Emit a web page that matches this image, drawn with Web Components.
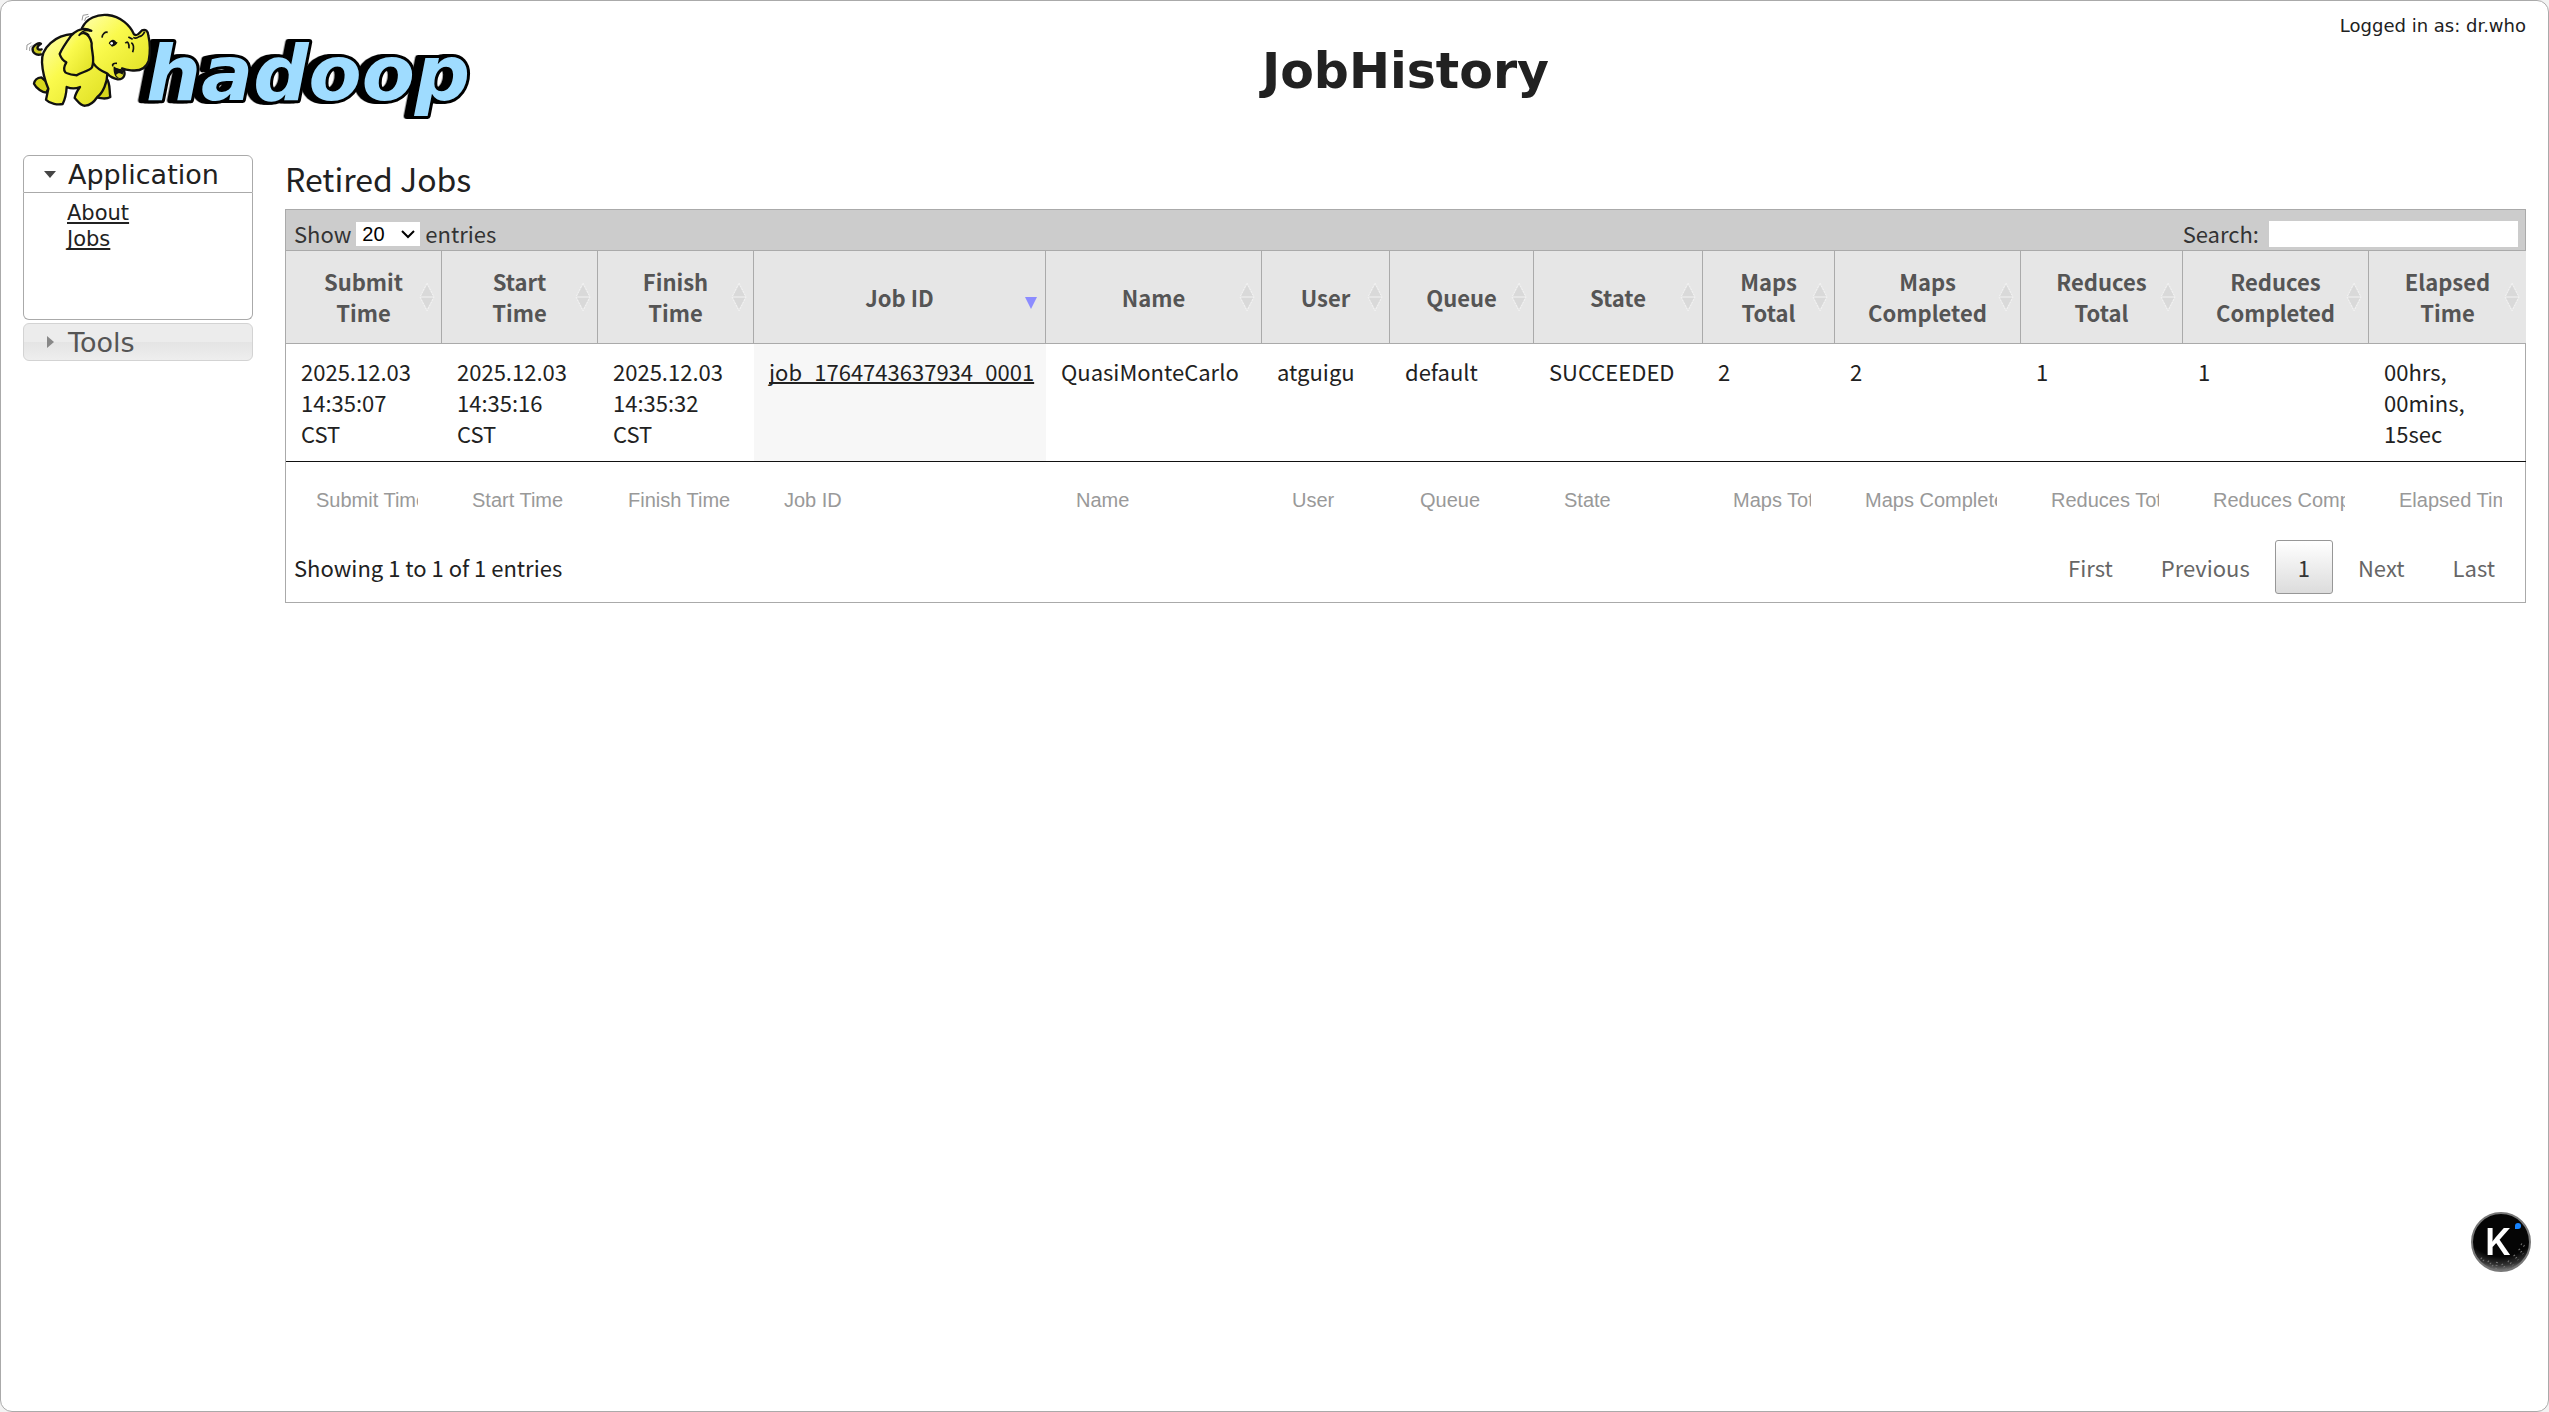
<!DOCTYPE html>
<html lang="en">
<head>
<meta charset="utf-8">
<title>JobHistory</title>
<style>
  body {
    margin: 0;
    background-color: #f3f3f3;
    color: #212121;
    font-family: "DejaVu Sans", sans-serif;
    font-size: 21px;
  }
</style>
</head>
<body>
<jh-page>
  <jh-logo slot="logo"></jh-logo>
  <span slot="user">Logged in as: dr.who</span>
  <span slot="title">JobHistory</span>
  <jh-nav slot="nav"></jh-nav>
  <jh-jobs slot="content"></jh-jobs>
</jh-page>
<jh-assistant></jh-assistant>

<script>
function makeTemplate(html) {
  const template = document.createElement("template");
  template.innerHTML = html;
  return template;
}

class BaseElement extends HTMLElement {
  constructor() {
    super();
    const shadow = this.attachShadow({ mode: "open" });
    shadow.appendChild(this.constructor.template.content.cloneNode(true));
  }
}

class Page extends BaseElement {
  static template = makeTemplate(`
    <style>
      :host {
        display: grid;
        grid-template-columns: 230px minmax(0, 1fr);
        grid-template-rows: auto 1fr;
        column-gap: 32px;
        box-sizing: border-box;
        min-height: 100vh;
        padding: 9px 22px 24px;
        border: solid 1px #aaa;
        border-radius: 12px;
        background-color: #fff;
      }
      .logo {
        height: 145px;
      }
      .banner {
        text-align: center;
      }
      .user {
        padding-top: 4px;
        font-size: 18px;
        line-height: 24px;
        text-align: right;
      }
      h1 {
        margin: 0;
        font-size: 49px;
        line-height: 67px;
      }
    </style>
    <header class="logo"><slot name="logo"></slot></header>
    <div class="banner">
      <div class="user"><slot name="user"></slot></div>
      <h1><slot name="title"></slot></h1>
    </div>
    <slot name="nav"></slot>
    <slot name="content"></slot>
  `);
}

class Logo extends BaseElement {
  static template = makeTemplate(`
    <style>
      :host {
        display: block;
      }
      svg {
        display: block;
        width: 450px;
        height: 110px;
      }
      text {
        font-family: "DejaVu Sans", sans-serif;
        font-size: 232px;
        font-weight: bold;
        font-style: italic;
        fill: #9fdcff;
        stroke: #000;
        stroke-width: 18px;
        stroke-linejoin: round;
        paint-order: stroke;
        filter: drop-shadow(-10px 0 0 #000) drop-shadow(-12px 0 0 #000);
      }
      .ink {
        fill: none;
        stroke: #111;
        stroke-width: 5px;
      }
    </style>
    <svg viewBox="69 30 1350 330" role="img" aria-label="hadoop elephant">
      <defs>
        <linearGradient id="skin" x1="0" y1="0" x2="1" y2="1">
          <stop offset="0" stop-color="#ffffb0"/>
          <stop offset=".4" stop-color="#fafa4d"/>
          <stop offset="1" stop-color="#dede20"/>
        </linearGradient>
      </defs>
      <text x="438" y="300">hadoop</text>
      <g fill="url(#skin)" stroke="#111" stroke-width="7" stroke-linejoin="round" stroke-linecap="round">
        <path d="M124 232C110 233 103 243 102 251C110 267 127 277 139 278L150 255Z" fill="#d6d61c"/>
        <path d="M319 235C332 248 327 270 331 291C320 298 299 296 286 290L296 252Z" fill="#d6d61c"/>
        <path d="M124 163C107 168 96 157 98 144C104 134 116 127 123 131C109 139 108 152 125 148" fill="#c9c91e"/>
        <path d="M219 102C166 105 123 143 126 187C128 225 136 245 145 266L138 299C150 312 174 315 188 312C194 300 199 280 200 261C212 266 226 267 240 261C232 272 226 282 224 294C234 304 242 319 256 317C273 316 284 303 292 291C309 278 322 247 322 221L290 140Z"/>
        <path d="M246 84C260 55 291 42 323 45C362 49 391 77 402 103C414 111 418 97 426 91C437 86 444 94 445 106C451 133 451 158 446 183C438 206 419 214 393 211C384 210 374 208 366 205C380 219 374 239 353 238C337 235 326 226 321 220C304 213 289 203 280 190Z"/>
        <path d="M274 92C251 80 229 91 214 106C201 124 187 143 179 162C183 175 189 182 199 187C192 199 190 210 196 217C206 224 221 224 230 226C245 216 268 213 276 202C286 178 273 150 275 130C271 112 265 102 252 99"/>
      </g>
      <path class="ink" d="M272 94C254 87 243 96 236 107C246 97 260 98 267 105M306 113C307 102 315 95 323 97M400 112C408 118 412 114 417 110C425 109 432 100 434 95M376 130C382 122 388 128 387 145M394 128C402 134 402 145 398 157M385 111L398 118M339 199C335 193 341 189 351 190"/>
      <path d="M326 130C332 117 344 116 349 127C357 122 349 139 336 140Z" fill="#111"/>
      <circle cx="335" cy="130" r="4" fill="#fff"/>
      <path d="M341 199C353 208 362 206 367 209C374 218 367 230 351 234C341 225 340 211 341 199Z" fill="#111"/>
      <path d="M348 225C354 217 362 219 367 224C362 235 353 234 348 225Z" fill="#dada2b"/>
      <path d="M246 61L249 46L265 43M254 63L257 53L267 49M80 150L81 135L94 128M89 153L89 142L98 136" fill="none" stroke="#999" stroke-width="3"/>
    </svg>
  `);
}

class Nav extends BaseElement {
  static template = makeTemplate(`
    <style>
      :host {
        display: block;
      }
      h3 {
        margin: 0;
      }
      button {
        display: flex;
        align-items: center;
        gap: 12px;
        width: 100%;
        height: 38px;
        padding: 0 20px;
        border: solid 1px #aaa;
        border-radius: 6px 6px 0 0;
        background-color: #fff;
        color: #212121;
        font-family: inherit;
        font-size: 27px;
      }
      button svg {
        width: 12px;
        height: 12px;
        fill: #454545;
      }
      .closed {
        margin-top: 3px;
        border-color: #d3d3d3;
        border-radius: 6px;
        background: linear-gradient(#ececec 50%, #e4e4e4 50%, #eee);
        color: #555;
      }
      .closed svg {
        fill: #888;
      }
      ul {
        height: 119px;
        margin: 0;
        padding: 7px 0 0 43px;
        border: solid #aaa;
        border-width: 0 1px 1px;
        border-radius: 0 0 6px 6px;
        list-style: none;
        line-height: 26px;
      }
      a {
        color: #212121;
        text-decoration-thickness: 2px;
        text-decoration-skip-ink: none;
        text-underline-offset: 2px;
      }
    </style>
    <nav>
      <h3><button aria-expanded="true"><svg viewBox="0 0 12 12"><path d="M0 3H12L6 10Z"/></svg>Application</button></h3>
      <ul>
        <li><a href="#about">About</a></li>
        <li><a href="#jobs">Jobs</a></li>
      </ul>
      <h3><button class="closed" aria-expanded="false"><svg viewBox="0 0 12 12"><path d="M3 0L10 6L3 12Z"/></svg>Tools</button></h3>
    </nav>
  `);
}

// Header label with its sort arrows, order="desc" marks the active column
class SortHeader extends BaseElement {
  static template = makeTemplate(`
    <style>
      :host {
        display: grid;
        grid-template-columns: 16px 1fr 16px;
        align-items: center;
      }
      button {
        grid-column: 2;
        padding: 0;
        border: none;
        background: none;
        color: inherit;
        font: inherit;
      }
      svg {
        width: 16px;
        height: 30px;
      }
      .both {
        fill: #d9d9d9;
      }
      .edge {
        fill: none;
        stroke: #f4f4f4;
        stroke-dasharray: 2 1;
      }
      .desc {
        display: none;
        fill: #8c8cff;
      }
      :host([order="desc"]) .both,
      :host([order="desc"]) .edge {
        display: none;
      }
      :host([order="desc"]) .desc {
        display: inline;
      }
    </style>
    <button><slot></slot></button>
    <svg viewBox="0 0 16 30" aria-hidden="true">
      <path class="both" d="M8 3L14 14H2ZM2 16H14L8 27Z"/>
      <path class="edge" d="M8 1L15 15L8 29L1 15Z"/>
      <path class="desc" d="M2 15H14L8 27Z"/>
    </svg>
  `);
}

class Jobs extends BaseElement {
  static template = makeTemplate(`
    <style>
      :host {
        display: block;
        font-family: "Noto Sans CJK SC", sans-serif;
        font-size: 22px;
        line-height: 31px;
      }
      h2 {
        margin: 0;
        padding-bottom: 8px;
        font-size: 32px;
        font-weight: normal;
        line-height: 46px;
      }
      .wrapper {
        border: solid 1px #aaa;
      }
      .toolbar {
        display: flex;
        justify-content: space-between;
        align-items: flex-end;
        box-sizing: border-box;
        height: 41px;
        padding: 0 7px 1px 8px;
        border-bottom: solid 1px #aaa;
        background-color: #ccc;
        color: #333;
      }
      label {
        display: flex;
        align-items: center;
        gap: 5px;
      }
      .search {
        gap: 10px;
      }
      .length {
        display: grid;
        align-items: center;
      }
      .length > * {
        grid-area: 1 / 1;
      }
      .length svg {
        justify-self: end;
        width: 14px;
        height: 10px;
        margin-right: 5px;
        fill: none;
        stroke: #000;
        stroke-width: 2px;
        pointer-events: none;
      }
      select {
        appearance: none;
        width: 64px;
        height: 24px;
        padding: 0 6px;
        border: none;
        border-radius: 0;
        background-color: #fff;
        color: #000;
        font-family: "Liberation Sans", sans-serif;
        font-size: 20px;
      }
      input {
        box-sizing: border-box;
        padding: 1px 3px;
        border: none;
        background-color: #fff;
        font-family: "Liberation Sans", sans-serif;
        font-size: 20px;
      }
      input::placeholder {
        color: #999;
      }
      .search input {
        width: 249px;
        height: 26px;
      }
      table {
        width: 100%;
        table-layout: fixed;
        border-collapse: separate;
        border-spacing: 0;
      }
      thead th {
        padding: 15px 6px;
        border-right: solid 1px #aaa;
        border-bottom: solid 1px #aaa;
        background-color: #e6e6e6;
        color: #555;
      }
      thead th:last-child {
        border-right: none;
      }
      tbody td {
        padding: 12px 15px;
        border-bottom: solid 1px #111;
        vertical-align: top;
      }
      .sorted {
        background-color: #f7f7f7;
      }
      .sorted a {
        color: #212121;
        text-decoration-thickness: 2px;
        text-decoration-skip-ink: none;
      }
      tfoot td {
        padding: 24px 21px 24px 27px;
      }
      tfoot input {
        display: block;
        width: 100%;
        height: 28px;
      }
      .footer {
        display: flex;
        justify-content: space-between;
        align-items: center;
        padding: 2px 7px 8px 8px;
      }
      .pages {
        display: flex;
        gap: 2px;
      }
      .pages button {
        height: 54px;
        padding: 0 22px;
        border: solid 1px transparent;
        border-radius: 3px;
        background: none;
        color: #666;
        font: inherit;
      }
      .pages button.current {
        border-color: #979797;
        background: linear-gradient(#fff, #dcdcdc);
        color: #333;
      }
    </style>
    <h2>Retired Jobs</h2>
    <div class="wrapper">
      <div class="toolbar">
        <label>Show
          <span class="length">
            <select><option>20</option><option>40</option><option>60</option><option>80</option><option>100</option></select>
            <svg viewBox="0 0 14 10"><path d="M1 2L7 8L13 2"/></svg>
          </span>
          entries
        </label>
        <label class="search">Search: <input type="search"></label>
      </div>
      <table>
        <colgroup></colgroup>
        <thead><tr></tr></thead>
        <tbody><tr></tr></tbody>
        <tfoot><tr></tr></tfoot>
      </table>
      <div class="footer">
        <div>Showing 1 to 1 of 1 entries</div>
        <div class="pages">
          <button>First</button>
          <button>Previous</button>
          <button class="current">1</button>
          <button>Next</button>
          <button>Last</button>
        </div>
      </div>
    </div>
  `);

  // the widths are shares, a fixed table stretches them to its own width
  static columns = [
    { name: "Submit Time", width: 156, value: "2025.12.03 14:35:07 CST" },
    { name: "Start Time", width: 156, value: "2025.12.03 14:35:16 CST" },
    { name: "Finish Time", width: 156, value: "2025.12.03 14:35:32 CST" },
    { name: "Job ID", width: 292, value: "job_1764743637934_0001", sorted: true },
    { name: "Name", width: 216, value: "QuasiMonteCarlo" },
    { name: "User", width: 128, value: "atguigu" },
    { name: "Queue", width: 144, value: "default" },
    { name: "State", width: 169, value: "SUCCEEDED" },
    { name: "Maps Total", width: 132, value: "2" },
    { name: "Maps Completed", width: 186, value: "2" },
    { name: "Reduces Total", width: 162, value: "1" },
    { name: "Reduces Completed", width: 186, value: "1" },
    { name: "Elapsed Time", width: 157, value: "00hrs, 00mins, 15sec" },
  ];

  connectedCallback() {
    const cols = Jobs.columns;
    const fill = (selector, render) => {
      this.shadowRoot.querySelector(selector).innerHTML = cols.map(render).join("");
    };
    fill("colgroup", (c) => `<col style="width: ${c.width}px">`);
    fill("thead tr", (c) => {
      const label = c.name.replace(" Time", "<br>Time").replace(" Total", "<br>Total").replace(" Completed", "<br>Completed");
      return `<th scope="col"><jh-sort-header${c.sorted ? ' order="desc"' : ""}>${label}</jh-sort-header></th>`;
    });
    fill("tbody tr", (c) => c.sorted
      ? `<td class="sorted"><a href="#${c.value}">${c.value}</a></td>`
      : `<td>${c.value}</td>`);
    fill("tfoot tr", (c) => `<td><input type="text" placeholder="${c.name}" aria-label="${c.name}"></td>`);
  }
}

class Assistant extends BaseElement {
  static template = makeTemplate(`
    <style>
      :host {
        display: block;
        position: fixed;
        right: 18px;
        bottom: 140px;
      }
      button {
        display: block;
        width: 60px;
        height: 60px;
        padding: 0;
        border: none;
        border-radius: 50%;
        background: none;
      }
      text {
        fill: #fff;
        font-family: Inter, sans-serif;
        font-size: 37px;
        font-weight: 600;
      }
    </style>
    <button aria-label="Open assistant">
      <svg viewBox="0 0 60 60" width="60" height="60">
        <defs>
          <radialGradient id="moon" cx=".5" cy=".05" r="1">
            <stop offset=".7" stop-color="#050505"/>
            <stop offset=".85" stop-color="#333"/>
            <stop offset="1" stop-color="#aaa"/>
          </radialGradient>
        </defs>
        <circle cx="30" cy="30" r="29" fill="url(#moon)" stroke="#777" stroke-width="2"/>
        <path d="M10 46L14 50M17 49L22 54M26 50L25 57M31 52L35 57M37 49L42 53M43 43L47 48M48 37L52 42M50 32L55 35" stroke="#777" stroke-width="2" stroke-dasharray="1 2"/>
        <text x="14" y="43">K</text>
        <path d="M44 17V14A3 3 0 1 1 47 17Z" fill="#1784ff"/>
      </svg>
    </button>
  `);
}

customElements.define("jh-page", Page);
customElements.define("jh-logo", Logo);
customElements.define("jh-nav", Nav);
customElements.define("jh-sort-header", SortHeader);
customElements.define("jh-jobs", Jobs);
customElements.define("jh-assistant", Assistant);
</script>
</body>
</html>
